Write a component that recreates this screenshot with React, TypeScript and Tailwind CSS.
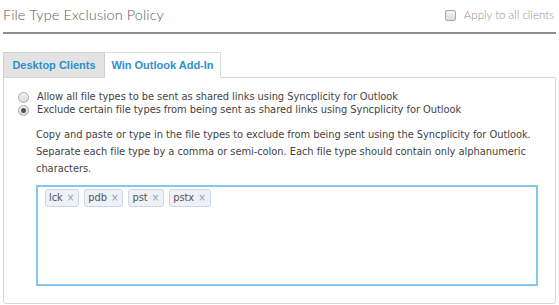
import { useState } from "react";

const tags = ["lck", "pdb", "pst", "pstx"];

export default function App() {
  const [choice, setChoice] = useState("exclude");
  const [items, setItems] = useState(tags);

  return (
    <div className="w-[559px] h-[305px] bg-white px-[3px] font-['Liberation_Sans',Arial,sans-serif] overflow-hidden">
      {/* Header */}
      <div className="flex items-center justify-between h-[34px] border-b-2 border-[#8e8e8e] pb-[2px]">
        <h1 className="font-['Lato',sans-serif] text-[14.5px] font-light text-[#5c5c5c] tracking-[0.1px]">
          File Type Exclusion Policy
        </h1>
        <label className="flex items-center gap-[8px] pr-[2px] font-['Lato',sans-serif] text-[11.5px] font-light text-[#8f8f8f]">
          <span className="w-[11px] h-[11px] rounded-[2px] border border-[#a9a9a9] bg-gradient-to-b from-[#f4f4f4] to-[#dedede]" />
          Apply to all clients
        </label>
      </div>

      {/* Tabs */}
      <div className="flex mt-[18px] h-[26px] relative z-10 -mb-px">
        <div className="w-[102px] flex items-center justify-center bg-[#e3e3e3] border border-[#d0d0d0] border-b-[#d6d6d6] text-[11px] font-bold text-[#2e8fcc]">
          Desktop Clients
        </div>
        <div className="w-[116px] flex items-center justify-center bg-white border border-l-0 border-[#dcdcdc] border-b-white text-[11px] font-bold text-[#2e8fcc]">
          Win Outlook Add-In
        </div>
      </div>

      {/* Panel */}
      <div className="h-[227px] border border-[#d6d6d6] rounded-b-[3px] pt-[13px] pl-[14px] pr-[17px] text-[11px] tracking-[-0.05px] text-[#444] font-['DejaVu_Sans_Condensed','Liberation_Sans',sans-serif]">
        <label className="flex items-center h-[12px] gap-[8px]" onClick={() => setChoice("allow")}>
          <Radio on={choice === "allow"} />
          <span>Allow all file types to be sent as shared links using Syncplicity for Outlook</span>
        </label>
        <label className="flex items-center h-[12px] mt-[1px] gap-[8px]" onClick={() => setChoice("exclude")}>
          <Radio on={choice === "exclude"} />
          <span>Exclude certain file types from being sent as shared links using Syncplicity for Outlook</span>
        </label>

        <div className="pl-[18px] mt-[10px]">
          <p className="leading-[17px]">
            Copy and paste or type in the file types to exclude from being sent using the Syncplicity for Outlook.
            Separate each file type by a comma or semi-colon. Each file type should contain only alphanumeric
            characters.
          </p>
          <div className="mt-[8px] h-[101px] border-2 border-[#86c5ec] px-[7px] py-[2px] flex flex-wrap content-start gap-[5px]">
            {items.map((t) => (
              <span
                key={t}
                className="h-[18px] flex items-center gap-[4px] pl-[3px] pr-[4px] rounded-[3px] border border-[#cdd6e6] bg-[#eef1f7] text-[#555]"
              >
                {t}
                <button
                  className="text-[10px] text-[#8d9cb5] leading-none"
                  onClick={() => setItems(items.filter((x) => x !== t))}
                >
                  ×
                </button>
              </span>
            ))}
          </div>
        </div>
      </div>
    </div>
  );
}

function Radio({ on }: { on: boolean }) {
  return (
    <span className="w-[11px] h-[11px] rounded-full border border-[#a8a8a8] bg-gradient-to-b from-[#f2f2f2] to-[#dcdcdc] flex items-center justify-center shrink-0">
      {on && <span className="w-[5px] h-[5px] rounded-full bg-[#555]" />}
    </span>
  );
}
